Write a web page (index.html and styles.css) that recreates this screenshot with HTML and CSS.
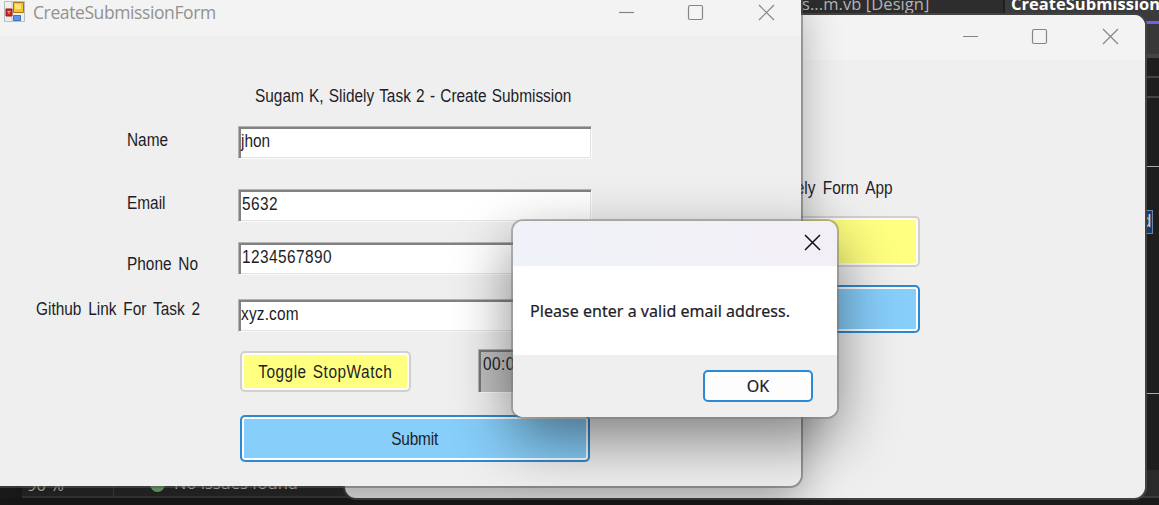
FILE: index.html
```html
<!DOCTYPE html>
<html lang="en">
<head>
<meta charset="utf-8">
<title>CreateSubmissionForm</title>
<link rel="stylesheet" href="styles.css">
</head>
<body>
<div class="desktop">
  <div class="ide">
    <div class="tabs">
      <div class="tab"><span class="tab-name">ss...m.vb [Design]</span></div>
      <div class="tab active"><span class="tab-title">CreateSubmission</span></div>
    </div>
    <div class="toolbar"><i class="mark"></i></div>
    <div class="band first"></div>
    <div class="band second"></div>
    <div class="editor"><span class="selected">d</span></div>
    <div class="output"></div>
    <div class="status">
      <span class="percent">90 %</span><i class="dot"></i><span class="issues">No issues found</span>
    </div>
    <div class="bottom"></div>
  </div>

  <section class="window back">
    <header class="titlebar">
      <svg class="controls" width="160" height="20" viewBox="0 0 160 20"><path d="M3 9.500H18"/><rect x="72.500" y="2.500" width="14" height="14" rx="1.500"/><path d="M143 2L158 17M158 2L143 17"/></svg>
    </header>
    <div class="back-body">
      <h2 class="app-title"><span class="t w-app">Slidely Form App</span></h2>
      <div class="btn yellow big"></div>
      <div class="btn blue big"></div>
    </div>
  </section>

  <section class="window front">
    <header class="titlebar">
      <svg class="app-icon" width="22" height="22" viewBox="0 0 22 22">
        <path d="M.5.5h20v20H.5z" fill="#eee" stroke="#bcbcbc"/>
        <path d="M8 1v20M1 8h20M12 15v6" stroke="#c8c8c8"/>
        <path d="M9.500 1.500h10v10h-10z" fill="#f6c52c" stroke="#a47b0b"/>
        <path d="M11 3h6v5h-6z" fill="#ffe27c"/>
        <path d="M2 8h6v7H2z" fill="#c62a20" stroke="#94221b"/>
        <path d="M3.500 10.500h3M5 10v3" stroke="#f4a59b"/>
        <path d="M9.500 14.500h7v5h-7z" fill="#5f93e8" stroke="#3f70c6"/>
      </svg>
      <span class="caption">CreateSubmissionForm</span>
      <svg class="controls" width="160" height="20" viewBox="0 0 160 20"><path d="M3 9.500H18"/><rect x="72.500" y="2.500" width="14" height="14" rx="1.500"/><path d="M143 2L158 17M158 2L143 17"/></svg>
    </header>
    <div class="form">
      <h1 class="heading"><span class="t w-heading">Sugam K, Slidely Task 2 - Create Submission</span></h1>
      <div class="row name"><label class="label"><span class="t">Name</span></label><div class="field low"><span class="t">jhon</span></div></div>
      <div class="row email"><label class="label"><span class="t">Email</span></label><div class="field"><span class="t w-num">5632</span></div></div>
      <div class="row phone"><label class="label"><span class="t">Phone No</span></label><div class="field"><span class="t w-num">1234567890</span></div></div>
      <div class="row github"><label class="label"><span class="t">Github Link For Task 2</span></label><div class="field low"><span class="t w-xyz">xyz.com</span></div></div>
      <div class="timer-row"><div class="btn yellow toggle"><span class="t w-toggle">Toggle StopWatch</span></div><div class="timer"><span class="t w-num">00:00:00</span></div></div>
      <div class="btn blue submit"><span class="t w-submit">Submit</span></div>
    </div>
  </section>

  <section class="dialog">
    <header class="dialog-head"><svg width="17" height="17" viewBox="0 0 17 17"><path d="M1 1L16 16M16 1L1 16"/></svg></header>
    <div class="dialog-body"><span class="message">Please enter a valid email address.</span></div>
    <footer class="dialog-foot"><div class="ok">OK</div></footer>
  </section>
</div>
</body>
</html>
```
FILE: styles.css
```css
* { box-sizing: border-box; }
body { margin: 0; overflow: hidden; background: #1b1b1b; }
h1, h2 { margin: 0; font-weight: 400; }
.desktop { position: relative; width: 1159px; height: 505px; overflow: hidden; font-family: "Liberation Sans", Arial, sans-serif; }

.ide { display: flex; flex-direction: column; height: 505px; background: #1e1e1e; font-family: "Open Sans", sans-serif; color: #b4b4b4; }
.tabs { display: flex; height: 24px; flex: none; }
.tab { width: 1005px; flex: none; padding-left: 794px; background: #2d2d2d; border-right: 2px solid #202020; font-size: 16.5px; line-height: 22px; white-space: nowrap; }
.tab-name { display: block; margin-top: -7px; letter-spacing: .08px; }
.tab.active { width: 154px; padding-left: 6px; background: #3b3b3b; color: #fff; font-weight: 700; border-right: 0; border-bottom: 3px solid #7160e8; }
.tab-title { display: block; margin-top: -7px; letter-spacing: .02px; }
.toolbar { display: flex; justify-content: flex-end; height: 34px; flex: none; background: #383838; border-bottom: 4px solid #444; padding: 9px 13px 0 0; }
.mark { width: 2px; height: 14px; background: #a9764b; }
.band { height: 20px; flex: none; border-bottom: 2px solid #444; }
.editor { display: flex; justify-content: flex-end; height: 228px; margin-top: 68px; flex: none; border-top: 1px solid #aaa; border-bottom: 1px solid #aaa; padding: 43px 6px 0 0; }
.selected { width: 14px; height: 24px; padding-left: 1px; background: #123f70; border: 1px solid #6b87a5; color: #ccc; font: 18px/22px "Liberation Mono", monospace; }
.output { height: 76px; flex: none; }
.status { display: flex; height: 28px; flex: none; align-items: center; background: #2a2a2a; border-bottom: 2px solid #3c3c3c; margin-left: 22px; font-size: 16.5px; color: #ccc; }
.percent { width: 92px; height: 26px; padding-left: 5px; line-height: 29px; border-right: 1px solid #444; }
.dot { width: 15px; height: 15px; margin: 2px 9px 0 36px; border-radius: 50%; background: #76b276; }
.issues { line-height: 30px; }
.bottom { flex: 1; background: #1a1a1a; }

.window { position: absolute; overflow: hidden; background: #efefef; }
.back { left: 345px; top: 15px; width: 800px; height: 483px; border-radius: 11px; box-shadow: 0 0 0 2px #434343; }
.front { left: -10px; top: -11px; width: 811px; height: 497px; border-radius: 11px; box-shadow: 0 0 0 2px rgba(90,90,90,.5), 0 18px 42px rgba(0,0,0,.3); }
.titlebar { display: flex; align-items: center; background: #f3f3f3; }
.back .titlebar { height: 45px; padding-right: 25px; }
.front .titlebar { height: 47px; padding: 0 25px 0 14px; }
.controls { margin-left: auto; fill: none; stroke: #858585; stroke-width: 1.2; }
.back .controls { margin-bottom: 1px; }
.app-icon { margin: 0 7px 1px 0; }
.caption { font: 17.5px/22px "Open Sans", sans-serif; color: #919191; letter-spacing: -.4px; margin-bottom: 1px; }

.t { display: inline-block; transform: scaleX(.88); transform-origin: left; white-space: nowrap; font-size: 17.5px; line-height: 20px; color: #1d1d28; word-spacing: 2.9px; }
.w-heading { word-spacing: 1.1px; }
.w-num { letter-spacing: .5px; }
.w-xyz { letter-spacing: .2px; }
.w-toggle { letter-spacing: .6px; word-spacing: 1.5px; }
.w-submit { letter-spacing: -.2px; }
.w-app { word-spacing: 3.5px; }
.form { padding: 50px 0 0 10px; }
.heading { height: 40px; padding-left: 255px; line-height: 20px; font-size: 17.5px; }
.row { display: flex; height: 33px; }
.label { width: 238px; padding: 4px 0 0 127px; line-height: 20px; }
.field, .timer { border: 1px solid #fbfbfb; border-top-color: #b4b4b4; border-left-color: #b4b4b4; line-height: 20px; }
.field { width: 354px; height: 33px; background: #fff; padding: 4px 0 0 3px; box-shadow: inset 2px 2px #828282, inset -1px -1px #e3e3e3; }
.field.low { padding: 4px 0 0 2px; }
.email { margin-top: 30px; }
.phone { margin-top: 20px; }
.phone .label { padding-top: 12px; }
.github { margin-top: 24px; }
.github .label { padding: 0 0 0 36px; }
.timer-row { display: flex; gap: 67px; margin: 17px 0 0 240px; }
.btn { display: flex; align-items: center; justify-content: center; border: 2px solid #d0d0d0; border-radius: 5px; box-shadow: inset 0 0 0 2px #fdfdfd; }
.btn .t { transform-origin: center; }
.yellow { background: #ffff80; }
.blue { background: #87cefa; border-color: #2c8ad4; }
.toggle { width: 171px; height: 41px; margin-top: 2px; }
.timer { width: 110px; height: 44px; background: #c0c0c0; padding: 4px; box-shadow: inset 2px 2px #777; }
.submit { width: 350px; height: 47px; margin: 22px 0 0 240px; }

.back-body { padding: 118px 0 0 225px; }
.app-title { height: 38px; padding-left: 200px; line-height: 20px; font-size: 17.5px; }
.big { width: 350px; height: 51px; }
.big + .big { height: 48px; margin-top: 18px; }

.dialog { position: absolute; left: 513px; top: 221px; width: 324px; height: 196px; border-radius: 10px; background: #fff; overflow: hidden; box-shadow: 0 0 0 2px rgba(120,120,120,.5), 0 22px 60px rgba(0,0,0,.48); font-family: "Noto Sans", sans-serif; }
.dialog-head { display: flex; justify-content: flex-end; height: 45px; padding: 13px 16px 0 0; background: linear-gradient(90deg, #eff2f8, #f3eff7); }
.dialog-head svg { fill: none; stroke: #111; stroke-width: 1.5; }
.dialog-body { height: 89px; padding: 34px 0 0 17px; font-size: 16px; line-height: 22px; color: #202028; }
.message { display: block; white-space: nowrap; letter-spacing: .04px; -webkit-text-stroke: .2px #202028; }
.dialog-foot { display: flex; justify-content: flex-end; height: 62px; padding: 15px 24px 0 0; background: #efefef; }
.ok { width: 110px; height: 32px; background: #fdfdfd; border: 2px solid #2c8ad4; border-radius: 5px; text-align: center; font-size: 16px; line-height: 29px; color: #202028; -webkit-text-stroke: .2px #202028; }
```
